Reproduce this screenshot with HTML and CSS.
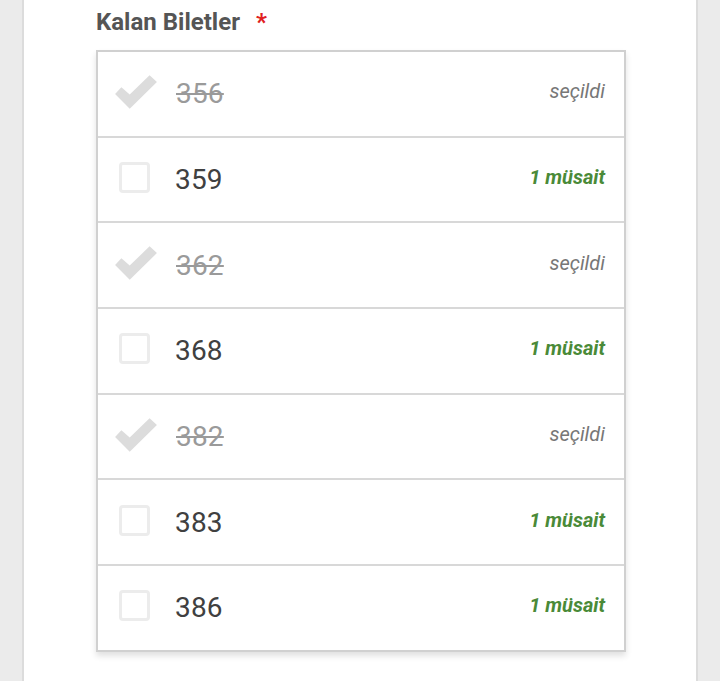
FILE: index.html
```html
<!DOCTYPE html>
<html lang="tr">
<head>
<meta charset="utf-8">
<link rel="stylesheet" href="styles.css">
</head>
<body>
<div class="page">
  <div class="card">
    <div class="label">Kalan Biletler <span class="req">*</span></div>
    <div class="list">
      <div class="row taken">
        <svg class="check" viewBox="0 0 44 34"><path d="M2 19 L8 12.5 L16 19.5 L35 1 L42 7.5 L16 33 Z" fill="#dcdcdc"/></svg>
        <span class="num">356</span><span class="status sel">seçildi</span>
      </div>
      <div class="row">
        <span class="box"></span>
        <span class="num">359</span><span class="status ok">1 müsait</span>
      </div>
      <div class="row taken">
        <svg class="check" viewBox="0 0 44 34"><path d="M2 19 L8 12.5 L16 19.5 L35 1 L42 7.5 L16 33 Z" fill="#dcdcdc"/></svg>
        <span class="num">362</span><span class="status sel">seçildi</span>
      </div>
      <div class="row">
        <span class="box"></span>
        <span class="num">368</span><span class="status ok">1 müsait</span>
      </div>
      <div class="row taken">
        <svg class="check" viewBox="0 0 44 34"><path d="M2 19 L8 12.5 L16 19.5 L35 1 L42 7.5 L16 33 Z" fill="#dcdcdc"/></svg>
        <span class="num">382</span><span class="status sel">seçildi</span>
      </div>
      <div class="row">
        <span class="box"></span>
        <span class="num">383</span><span class="status ok">1 müsait</span>
      </div>
      <div class="row">
        <span class="box"></span>
        <span class="num">386</span><span class="status ok">1 müsait</span>
      </div>
    </div>
  </div>
</div>
</body>
</html>
```

FILE: styles.css
```css
html, body {
  margin: 0;
  padding: 0;
}
body {
  background: #ebebeb;
  font-family: Roboto, "Noto Sans", sans-serif;
  width: 720px;
  height: 681px;
  overflow: hidden;
}
.page {
  padding-left: 22px;
  height: 681px;
}
.card {
  width: 676px;
  height: 681px;
  background: #fff;
  border-left: 2px solid #dcdcdc;
  border-right: 2px solid #dcdcdc;
  box-sizing: border-box;
  padding: 8px 0 0 72px;
}
.label {
  font-size: 24px;
  font-weight: 700;
  color: #555;
  line-height: 28px;
  height: 42px;
}
.req {
  color: #e02020;
  margin-left: 10px;
}
.list {
  width: 530px;
  box-sizing: border-box;
  border: 2px solid #d0d0d0;
  box-shadow: 0 4px 6px rgba(0,0,0,0.12);
}
.row {
  height: 83.7px;
  display: flex;
  align-items: center;
  padding: 0 19px 0 21px;
  border-top: 2px solid #d8d8d8;
}
.row:first-child {
  border-top: none;
}
.check {
  width: 46px;
  height: 36px;
  margin-left: -6px;
  margin-top: -4px;
}
.box {
  width: 31px;
  height: 31px;
  box-sizing: border-box;
  border: 3px solid #ececec;
  border-radius: 4px;
  margin-top: -4px;
}
.num {
  font-size: 28px;
  color: #404040;
  margin-left: 25px;
  letter-spacing: 0.2px;
}
.taken .num {
  color: #9a9a9a;
  text-decoration: line-through;
  text-decoration-thickness: 1.5px;
  margin-left: 17px;
}
.status {
  margin-left: auto;
  font-style: italic;
  font-size: 20px;
  margin-top: -5px;
}
.sel {
  color: #777;
}
.ok {
  color: #4a8a38;
  font-weight: 700;
}
```
